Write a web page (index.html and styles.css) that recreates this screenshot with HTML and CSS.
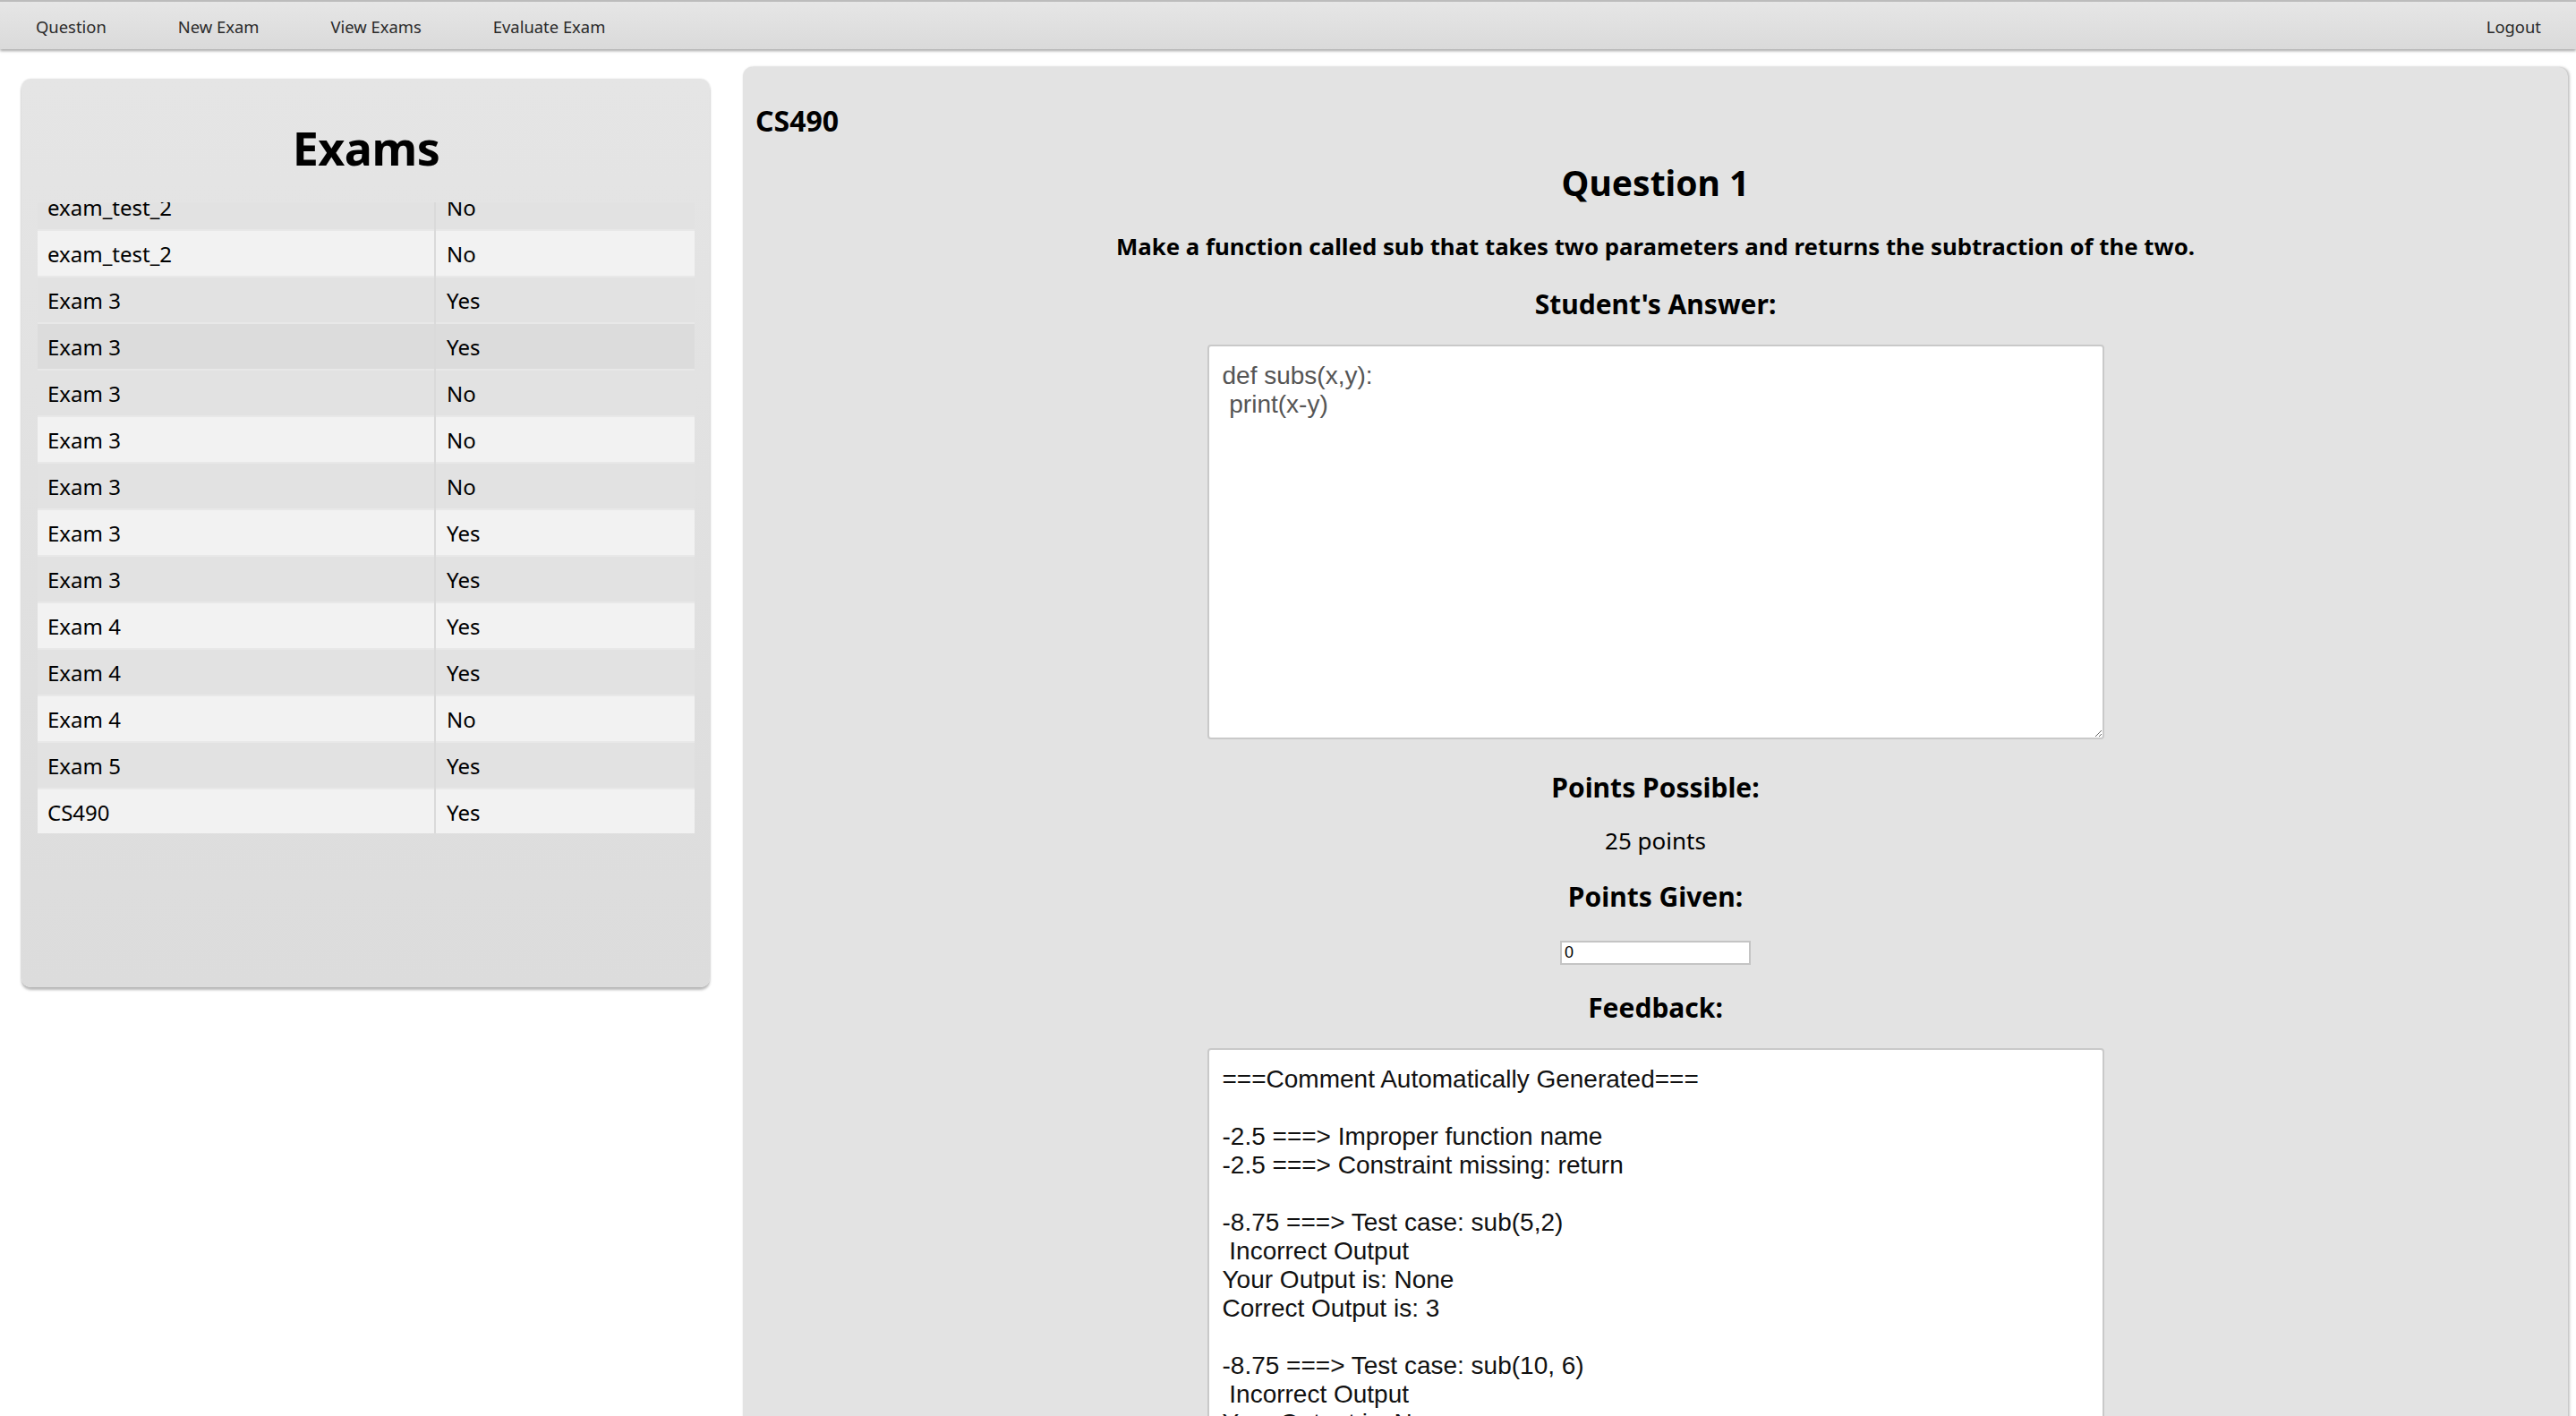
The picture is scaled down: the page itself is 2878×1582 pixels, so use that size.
FILE: index.html
```html
<!DOCTYPE html>
<html lang="en">
<head>
<meta charset="utf-8">
<title>Evaluate Exam</title>
<link rel="stylesheet" href="styles.css">
</head>
<body>
<nav class="topnav">
  <a class="nav-item" href="#">Question</a>
  <a class="nav-item" href="#">New Exam</a>
  <a class="nav-item" href="#">View Exams</a>
  <a class="nav-item" href="#">Evaluate Exam</a>
  <a class="nav-item nav-logout" href="#">Logout</a>
</nav>
<main class="layout">
  <aside class="exams-panel">
    <h1 class="exams-title">Exams</h1>
    <div class="exams-scroll">
      <table class="exams-table">
        <tbody>
          <tr class="row-grey"><td>exam_test_2</td><td>No</td></tr>
          <tr class="row-light"><td>exam_test_2</td><td>No</td></tr>
          <tr class="row-grey"><td>Exam 3</td><td>Yes</td></tr>
          <tr class="row-dark"><td>Exam 3</td><td>Yes</td></tr>
          <tr class="row-grey"><td>Exam 3</td><td>No</td></tr>
          <tr class="row-light"><td>Exam 3</td><td>No</td></tr>
          <tr class="row-grey"><td>Exam 3</td><td>No</td></tr>
          <tr class="row-light"><td>Exam 3</td><td>Yes</td></tr>
          <tr class="row-grey"><td>Exam 3</td><td>Yes</td></tr>
          <tr class="row-light"><td>Exam 4</td><td>Yes</td></tr>
          <tr class="row-grey"><td>Exam 4</td><td>Yes</td></tr>
          <tr class="row-light"><td>Exam 4</td><td>No</td></tr>
          <tr class="row-grey"><td>Exam 5</td><td>Yes</td></tr>
          <tr class="row-light"><td>CS490</td><td>Yes</td></tr>
        </tbody>
      </table>
    </div>
  </aside>
  <section class="grade-panel">
    <h3 class="exam-name">CS490</h3>
    <div class="grade-body">
      <h2 class="q-title">Question 1</h2>
      <p class="q-prompt">Make a function called sub that takes two parameters and returns the subtraction of the two.</p>
      <h3 class="q-label">Student's Answer:</h3>
      <textarea class="answer-box" readonly>def subs(x,y):
 print(x-y)</textarea>
      <h3 class="q-label label-points">Points Possible:</h3>
      <p class="q-points">25 points</p>
      <h3 class="q-label label-given">Points Given:</h3>
      <input class="given-input" type="text" value="0">
      <h3 class="q-label label-feedback">Feedback:</h3>
      <textarea class="feedback-box">===Comment Automatically Generated===

-2.5 ===&gt; Improper function name
-2.5 ===&gt; Constraint missing: return

-8.75 ===&gt; Test case: sub(5,2)
 Incorrect Output
Your Output is: None
Correct Output is: 3

-8.75 ===&gt; Test case: sub(10, 6)
 Incorrect Output
Your Output is: None
Correct Output is: 4</textarea>
    </div>
  </section>
</main>
</body>
</html>
```
FILE: styles.css
```css
* { box-sizing: border-box; }

html, body {
  margin: 0;
  padding: 0;
  background: #ffffff;
  font-family: "Noto Sans", "DejaVu Sans", sans-serif;
  color: #000;
  overflow: hidden;
}

.topnav {
  display: flex;
  align-items: center;
  height: 55px;
  border-top: 2px solid #bcbcbc;
  background: linear-gradient(#e6e6e6, #dadada);
  box-shadow: 0 2px 3px rgba(0, 0, 0, 0.35);
  padding-top: 2px;
}

.nav-item {
  padding: 0 40px;
  font-size: 18.4px;
  color: #2a2a2a;
  text-decoration: none;
}

.topnav .nav-logout {
  margin-left: auto;
  padding-right: 39px;
}

.layout {
  display: flex;
  align-items: flex-start;
  gap: 37px;
  padding: 20px 9px 0 24px;
}

.exams-panel {
  flex: 0 0 769px;
  height: 1015px;
  margin-top: 13px;
  padding: 46px 17px 0 18px;
  border-radius: 10px;
  background: linear-gradient(#e5e5e5, #dcdcdc);
  box-shadow: 0 3px 3px rgba(0, 0, 0, 0.28), 0 0 2px rgba(0, 0, 0, 0.12);
}

.exams-title {
  margin: 0;
  font-size: 52px;
  line-height: 62px;
  font-weight: 700;
  text-align: center;
  letter-spacing: -0.5px;
}

.exams-scroll {
  margin-top: 30px;
  height: 705px;
  overflow: hidden;
}

.exams-table {
  width: 100%;
  margin-top: -22px;
  border-collapse: collapse;
  font-size: 24px;
}

.exams-table tr {
  height: 52px;
  border-top: 2px solid #e8e8e8;
}

.exams-table td {
  padding: 0 11px;
  vertical-align: middle;
}

.exams-table td:first-child {
  width: 444px;
  border-right: 2px solid #dadada;
}

.exams-table td:last-child {
  padding-left: 12px;
}

.row-light { background: #f2f2f2; }
.row-grey { background: #e2e2e2; }
.row-dark { background: #dcdcdc; }

.grade-panel {
  flex: 1 1 auto;
  min-height: 1700px;
  padding: 41px 14px 0 14px;
  border-radius: 10px;
  background: #e3e3e3;
  box-shadow: 2px 0 3px rgba(0, 0, 0, 0.22), 0 0 2px rgba(0, 0, 0, 0.1);
}

.exam-name {
  margin: 0;
  font-size: 32px;
  line-height: 38px;
  font-weight: 700;
}

.grade-body {
  display: flex;
  flex-direction: column;
  align-items: center;
  text-align: center;
}

.q-title {
  margin: 27px 0 0;
  font-size: 39px;
  line-height: 46px;
  font-weight: 700;
}

.q-prompt {
  margin: 32px 0 0;
  font-size: 25.8px;
  line-height: 32px;
  font-weight: 700;
}

.q-label {
  margin: 31px 0 0;
  font-size: 30px;
  line-height: 36px;
  font-weight: 700;
}

.answer-box,
.feedback-box {
  display: block;
  width: 1002px;
  margin-top: 27px;
  padding: 17px 15px;
  border: 2px solid #c9c9c9;
  border-radius: 4px;
  background: #ffffff;
  font-family: "Liberation Sans", Arial, sans-serif;
  font-size: 28px;
  line-height: 32px;
  text-align: left;
  resize: both;
  outline: none;
}

.answer-box {
  height: 441px;
  color: #555555;
}

.label-points { margin-top: 36px; }

.q-points {
  margin: 25px 0 0;
  font-size: 26px;
  line-height: 32px;
}

.label-given { margin-top: 29px; }

.given-input {
  display: block;
  width: 213px;
  height: 27px;
  margin-top: 31px;
  padding: 0 3px;
  border: 2px solid #c4c4c4;
  background: #ffffff;
  font-family: "Liberation Sans", Arial, sans-serif;
  font-size: 18px;
  color: #000;
}

.label-feedback { margin-top: 30px; }

.feedback-box {
  height: 620px;
  margin-top: 27px;
  color: #111111;
}
```
